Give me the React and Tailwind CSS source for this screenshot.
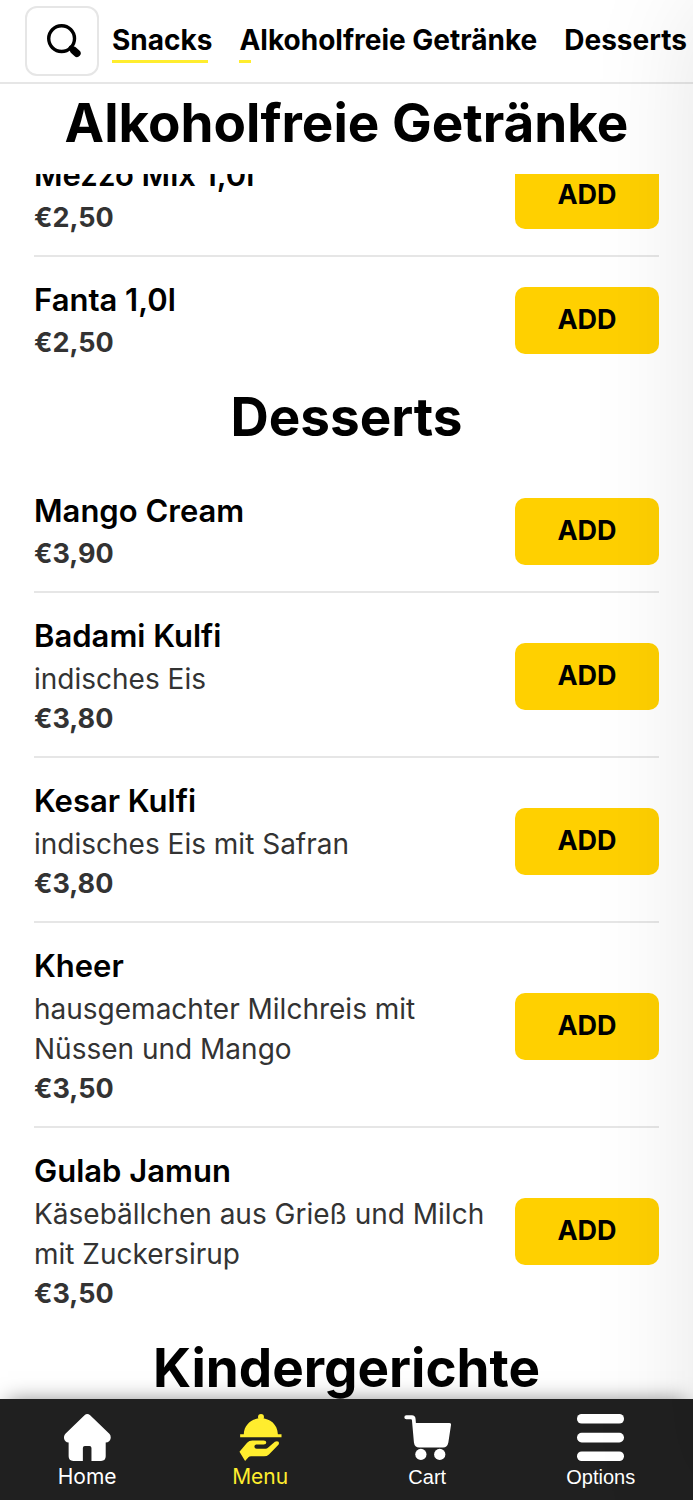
import { useState } from "react";
import clsx from "clsx";

const categories = [
  { name: "Snacks", bar: "w-[96%]" },
  { name: "Alkoholfreie Getränke", bar: "w-[4%]" },
  { name: "Desserts", bar: "w-0" },
];

const drinks = [
  { name: "Mezzo Mix 1,0l", price: "€2,50" },
  { name: "Fanta 1,0l", price: "€2,50" },
];

const desserts = [
  { name: "Mango Cream", price: "€3,90" },
  { name: "Badami Kulfi", text: "indisches Eis", price: "€3,80" },
  { name: "Kesar Kulfi", text: "indisches Eis mit Safran", price: "€3,80" },
  { name: "Kheer", text: "hausgemachter Milchreis mit Nüssen und Mango", price: "€3,50" },
  { name: "Gulab Jamun", text: "Käsebällchen aus Grieß und Milch mit Zuckersirup", price: "€3,50" },
];

function SearchIcon() {
  return (
    <svg className="w-9 h-9" viewBox="3 3 106 106" fill="none" stroke="currentColor" aria-hidden="true">
      <circle cx="49" cy="49" r="38" strokeWidth="10" />
      <path d="M76 77L84 83" strokeWidth="14" strokeLinecap="round" />
      <path d="M85 84L94 92" strokeWidth="22" strokeLinecap="round" />
    </svg>
  );
}

function HomeIcon() {
  return (
    <svg className="w-[47px] h-[47px]" viewBox="194 102 142 142" fill="currentColor" aria-hidden="true">
      <path d="M256 106Q264 98 273 106L331 162Q336 167 335 175Q333 187 320 188V230Q320 244 306 244H277V205Q277 199 271 199H257Q251 199 251 205V244H222Q208 244 208 230V188Q196 187 194 175Q193 167 199 161Z" />
    </svg>
  );
}

function MenuIcon() {
  return (
    <svg className="w-[43px] h-[47px]" viewBox="717 102 129 142" fill="currentColor" aria-hidden="true">
      <circle cx="783" cy="111" r="9" />
      <path d="M731 163C732 134 755 115 783 115C811 115 833 134 834 163H845V172H720V163Z" />
      <path d="M718 216L741 189Q747 182 757 182H791Q799 182 799 188Q799 194 791 194H768Q763 195 763 201Q764 207 770 207H797Q801 207 804 204L825 186Q832 182 836 186Q839 191 835 196L807 224Q801 230 792 230H753Q748 230 745 233L735 244Z" />
    </svg>
  );
}

function CartIcon() {
  return (
    <svg className="w-[47px] h-[47px]" viewBox="180 102 142 142" fill="currentColor" aria-hidden="true">
      <path d="M187 106H204Q214 106 215 117L216 129H317Q323 129 322 135L314 188Q311 203 298 203H226Q212 203 210 188L204 121Q204 118 201 118H187Q181 118 181 112Q181 106 187 106Z" />
      <circle cx="231" cy="224" r="17" />
      <circle cx="288" cy="224" r="17" />
    </svg>
  );
}

function OptionsIcon() {
  return (
    <svg className="w-[47px] h-[47px]" viewBox="0 0 142 142" fill="currentColor" aria-hidden="true">
      <rect y="0" width="142" height="29" rx="14" />
      <rect y="57" width="142" height="29" rx="14" />
      <rect y="113" width="142" height="29" rx="14" />
    </svg>
  );
}

const tabs = [
  { name: "Home", icon: HomeIcon, font: "text-[21px] font-['Inter',sans-serif]" },
  { name: "Menu", icon: MenuIcon, font: "text-[21px] font-['Inter',sans-serif]" },
  { name: "Cart", icon: CartIcon, font: "text-[20px] font-['Liberation_Sans',sans-serif]" },
  { name: "Options", icon: OptionsIcon, font: "text-[20px] font-['Liberation_Sans',sans-serif]" },
];

function Heading({ children }) {
  return (
    <h2 className="h-[90px] shrink-0 pt-1 text-center text-[53px] leading-[70px] font-bold bg-white whitespace-nowrap">
      {children}
    </h2>
  );
}

function Item({ item }) {
  return (
    <li className="flex items-center justify-between gap-6 pt-[21px] pb-[17px] border-b-2 border-[#e6e6e6] last:border-b-0 last:pb-[15px]">
      <div>
        <h3 className="text-[31px] leading-[44px] pb-px font-semibold">{item.name}</h3>
        {item.text && <p className="text-[28px] leading-10 text-[#333]">{item.text}</p>}
        <p className="text-[27px] leading-10 font-bold text-[#333]">{item.price}</p>
      </div>
      <button
        className="w-36 h-[67px] shrink-0 rounded-[10px] bg-[#ffd000] text-[27px] font-bold"
        aria-label={`ADD ${item.name}`}
      >
        ADD
      </button>
    </li>
  );
}

export default function App() {
  const [active, setActive] = useState("Menu");

  return (
    <div className="h-screen flex flex-col overflow-hidden bg-white text-black font-['Inter',sans-serif]">
      <header className="flex items-center h-[84px] shrink-0 pl-[25px] border-b-2 border-[#e6e6e6]">
        <button
          className="flex items-center justify-center w-[74px] h-[70px] shrink-0 pl-1 border-2 border-[#e6e6e6] rounded-xl"
          aria-label="Suche"
        >
          <SearchIcon />
        </button>
        <nav className="flex gap-[27px] ml-[13px] whitespace-nowrap">
          {categories.map((category) => (
            <a key={category.name} href="#menu" className="text-[28px] leading-10 font-bold">
              {category.name}
              <span className={clsx("block h-[3px] bg-[#ffed2e]", category.bar)} />
            </a>
          ))}
        </nav>
      </header>

      <Heading>Alkoholfreie Getränke</Heading>

      <main id="menu" className="flex-1 min-h-0 overflow-hidden">
        {/* list is scrolled part of the way under the section title */}
        <ul className="-mt-[42px] px-[34px]">
          {drinks.map((item) => (
            <Item key={item.name} item={item} />
          ))}
        </ul>
        <Heading>Desserts</Heading>
        <ul className="px-[34px]">
          {desserts.map((item) => (
            <Item key={item.name} item={item} />
          ))}
        </ul>
        <Heading>Kindergerichte</Heading>
      </main>

      <nav className="relative flex justify-around shrink-0 pt-[15px] pb-[7px] bg-[#202020] shadow-[0_-6px_20px_-8px_rgba(0,0,0,0.5)]">
        {tabs.map(({ name, icon: Icon, font }) => (
          <button
            key={name}
            onClick={() => setActive(name)}
            className={clsx("flex flex-col items-center", active === name ? "text-[#ffed2e]" : "text-white")}
          >
            <Icon />
            <span className={clsx("leading-8", font)}>{name}</span>
          </button>
        ))}
      </nav>

      <aside className="fixed inset-y-0 left-full w-80 shadow-[0_0_100px_rgba(0,0,0,0.1)] pointer-events-none" />
    </div>
  );
}
